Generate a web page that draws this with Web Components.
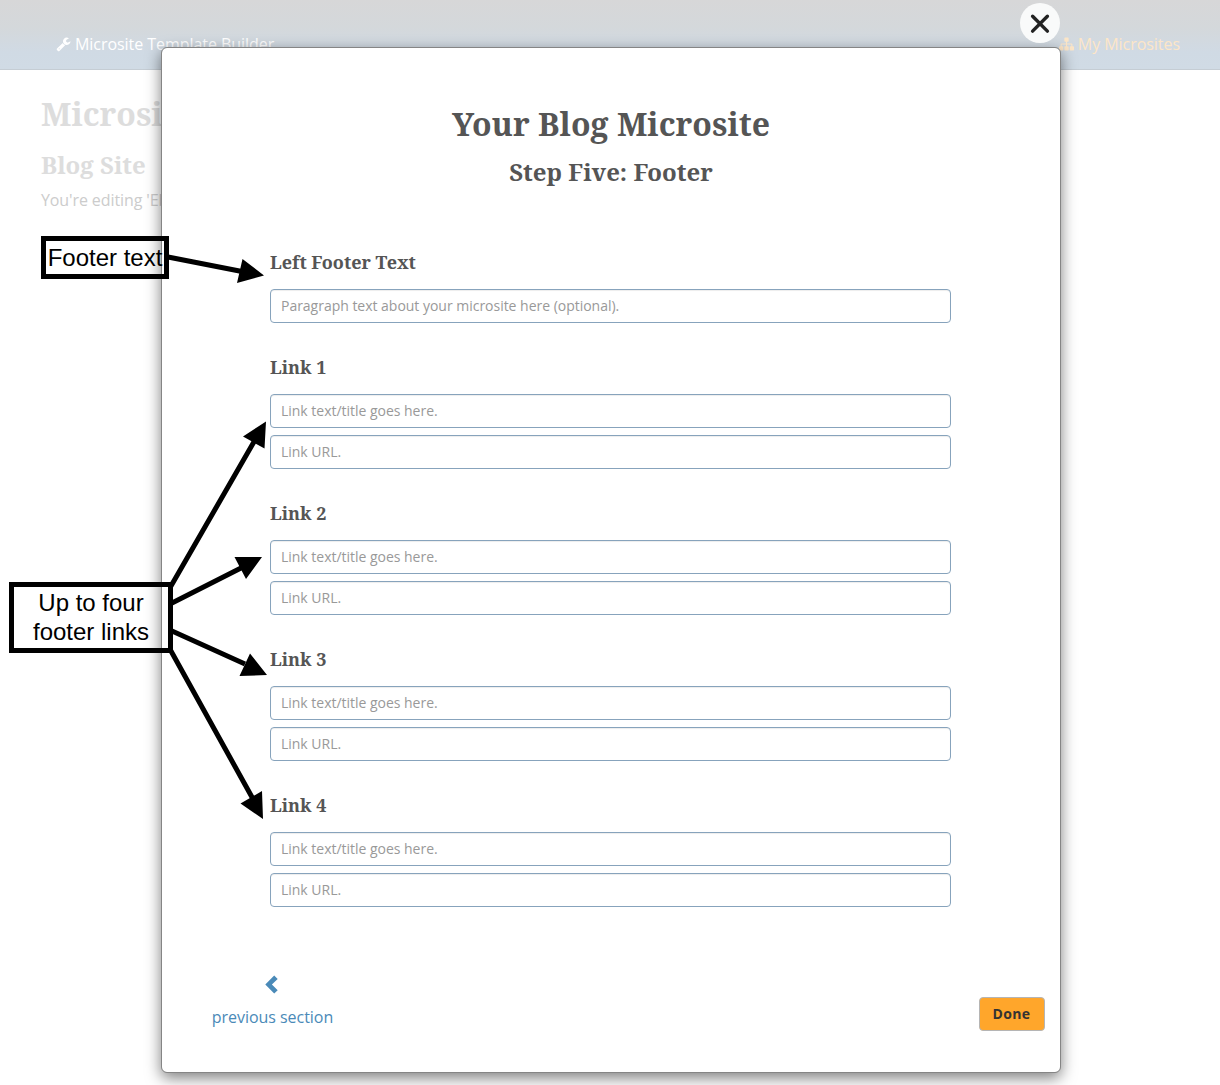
<!DOCTYPE html>
<html lang="en">
<head>
<meta charset="utf-8">
<title>Microsite Template Builder</title>
<style>
html,body{margin:0;height:1085px;overflow:hidden;background:#fff}
body{font-family:"Open Sans","Noto Sans",sans-serif;font-size:16px;color:#555}
</style>
</head>
<body>
<microsite-app></microsite-app>
<script>
const SERIF = '"Noto Serif","Droid Serif","DejaVu Serif",serif';
const define = (name, html, setup) => {
  const t = document.createElement('template');
  t.innerHTML = html;
  customElements.define(name, class extends HTMLElement {
    connectedCallback() {
      if (this.shadowRoot) return;
      const r = this.attachShadow({mode: 'open'});
      r.append(t.content.cloneNode(true));
      if (setup) setup(this, r);
    }
  });
};

define('site-nav', `
<style>
:host{display:flex;justify-content:space-between;box-sizing:border-box;height:70px;padding:33px 40px 0 56px;background:linear-gradient(#d7d7d8,#d4d8db 40%,#d0dae4 75%,#d0dbe5);border-bottom:1px solid #c5cdd4;line-height:22px}
span{display:flex;gap:4px;color:#fff;white-space:nowrap;letter-spacing:-.05px}
.r{color:#fde6c8}
svg{width:15px;height:16px;margin-top:3px;fill:currentColor;flex:none}
</style>
<span><svg viewBox="0 0 1792 1792"><path d="M448 1472q0-26-19-45t-45-19-45 19-19 45 19 45 45 19 45-19 19-45zm644-420l-682 682q-37 37-90 37-52 0-91-37l-106-108q-38-36-38-90 0-53 38-91l681-681q39 98 114.5 173.5t173.5 114.5zm634-435q0 39-23 106-47 134-164.5 217.5t-258.5 83.5q-185 0-316.5-131.5t-131.5-316.5 131.5-316.5 316.5-131.5q58 0 121.5 16.5t107.5 46.5q16 11 16 28t-16 28l-293 169v224l193 107q5-3 79-48.5t135.5-81 70.5-35.5q15 0 23.5 10t8.5 25z"/></svg>Microsite Template Builder</span>
<span class="r"><svg viewBox="0 0 1792 1792"><path d="M1792 1248v320q0 40-28 68t-68 28h-320q-40 0-68-28t-28-68v-320q0-40 28-68t68-28h96v-192h-512v192h96q40 0 68 28t28 68v320q0 40-28 68t-68 28h-320q-40 0-68-28t-28-68v-320q0-40 28-68t68-28h96v-192h-512v192h96q40 0 68 28t28 68v320q0 40-28 68t-68 28h-320q-40 0-68-28t-28-68v-320q0-40 28-68t68-28h96v-192q0-52 38-90t90-38h512v-192h-96q-40 0-68-28t-28-68v-320q0-40 28-68t68-28h320q40 0 68 28t28 68v320q0 40-28 68t-68 28h-96v192h512q52 0 90 38t38 90v192h96q40 0 68 28t28 68z"/></svg>My Microsites</span>`);

define('site-intro', `
<style>
:host{display:block;padding:24px 0 0 41px;white-space:nowrap}
h1,h2,p{margin:0;font-weight:700;font-family:${SERIF};color:#ddd}
h1{font-size:32px;line-height:40px}
h2{font-size:24px;line-height:30px;margin-top:16px}
p{font:16px/22px "Open Sans",sans-serif;color:#ccc;margin-top:9px;letter-spacing:-.1px}
</style>
<h1>Microsi</h1><h2>Blog Site</h2><p>You're editing 'Eb</p>`);

define('text-field', `
<style>
:host{display:block}
input{display:block;box-sizing:border-box;width:100%;height:34px;border:1px solid #87a3bc;border-radius:4px;padding:0 10px 2px;font:14px "Open Sans",sans-serif;letter-spacing:-.02px;background:#fff;box-shadow:inset 0 1px 1px rgba(0,0,0,.075);outline:0}
input::placeholder{color:#999;opacity:1}
</style><input type="text">`, (el, r) => { r.querySelector('input').placeholder = el.getAttribute('hint'); });

define('field-group', `
<style>
:host{display:flex;flex-direction:column;gap:7px}
h3{margin:0 0 7px;font:700 18px/26px ${SERIF};color:#555}
</style><h3></h3><slot></slot>`, (el, r) => { r.querySelector('h3').textContent = el.getAttribute('label'); });

define('done-button', `
<style>
:host{display:block}
button{display:block;box-sizing:border-box;width:66px;height:34px;border:1px solid #b5b5b5;border-radius:4px;background:#ffa62b;color:#333;font:700 14px "Open Sans",sans-serif;letter-spacing:.4px;padding:0 1px 2px 0}
</style><button><slot></slot></button>`);

define('prev-link', `
<style>
:host{display:flex;flex-direction:column;align-items:center;color:#4a8ab8;width:121px;line-height:22px;white-space:nowrap;letter-spacing:-.04px}
svg{width:13px;height:19px;margin:0 2px 12px 0;fill:currentColor}
</style><svg viewBox="0 0 13 19"><path d="M9.2.5 12.7 3.9 6.9 9.5l5.8 5.7-3.5 3.4L.3 9.5z"/></svg><span><slot></slot></span>`);

define('close-button', `
<style>
:host{display:block;width:40px;height:40px;border-radius:50%;background:#f9fafa}
svg{display:block}
</style><svg width="40" height="40" viewBox="0 0 40 40"><path d="M12.6 13.3 27.4 28.1M27.4 13.3 12.6 28.1" stroke="#222" stroke-width="3.4" stroke-linecap="round"/></svg>`);

define('step-modal', `
<style>
:host{display:flex;flex-direction:column;box-sizing:border-box;width:900px;height:1026px;border:1px solid #858585;border-radius:6px;background:#fff;background-clip:padding-box;box-shadow:0 5px 15px rgba(0,0,0,.5)}
header{text-align:center;padding-top:55px;font-family:${SERIF};color:#555}
h1{margin:0;font-size:32px;line-height:42px;letter-spacing:.03px}
h2{margin:10px 0 0;font-size:24px;line-height:34px}
form{display:flex;flex-direction:column;gap:31px;margin:60px 109px 0 108px}
footer{display:flex;justify-content:space-between;margin:68px 15px 0 50px}
done-button{margin-top:22px}
</style>
<header><h1>Your Blog Microsite</h1><h2>Step Five: Footer</h2></header>
<form></form>
<footer><prev-link>previous section</prev-link><done-button>Done</done-button></footer>`, (el, r) => {
  const links = [1,2,3,4].map(n => `<field-group label="Link ${n}"><text-field hint="Link text/title goes here."></text-field><text-field hint="Link URL."></text-field></field-group>`).join('');
  r.querySelector('form').innerHTML = `<field-group label="Left Footer Text"><text-field hint="Paragraph text about your microsite here (optional)."></text-field></field-group>` + links;
});

define('callout-box', `
<style>
:host{display:flex;align-items:center;justify-content:center;box-sizing:border-box;border:5px solid #000;color:#000;font:24px/29px "Liberation Sans",Arial,sans-serif;text-align:center;white-space:nowrap}
</style><span><slot></slot></span>`);

define('callout-arrows', `
<style>:host{display:block}svg{display:block}</style>
<svg width="290" height="840" viewBox="0 0 290 840">
<g stroke="#000" stroke-width="5">
<path d="M168 257 242 271.500M171 586 255 440M172 603 243 567M172 631 245 664M171 651 253 799"/></g>
<path d="M264 275.500 242.500 259 237 283ZM266 421.500 243 436.500 264.500 448.500ZM262 557 234.500 557 246 579ZM267 675 250 653.500 239.500 676ZM263 819 262 791 240.500 803.500Z"/>
</svg>`);

define('microsite-app', `
<style>
:host{display:block;position:relative;width:1220px;height:1085px;overflow:hidden}
step-modal{position:absolute;left:161px;top:47px}
close-button{position:absolute;left:1020px;top:3px}
callout-arrows{position:absolute;left:0;top:0;pointer-events:none}
.a,.b{position:absolute}
.a{left:41px;top:236px;width:128px;height:43px}
.b{left:9px;top:582px;width:164px;height:71px;padding-bottom:2px}
</style>
<site-nav></site-nav>
<site-intro></site-intro>
<step-modal></step-modal>
<close-button></close-button>
<callout-arrows></callout-arrows>
<callout-box class="a">Footer text</callout-box>
<callout-box class="b">Up to four<br>footer links</callout-box>`);
</script>
</body>
</html>
